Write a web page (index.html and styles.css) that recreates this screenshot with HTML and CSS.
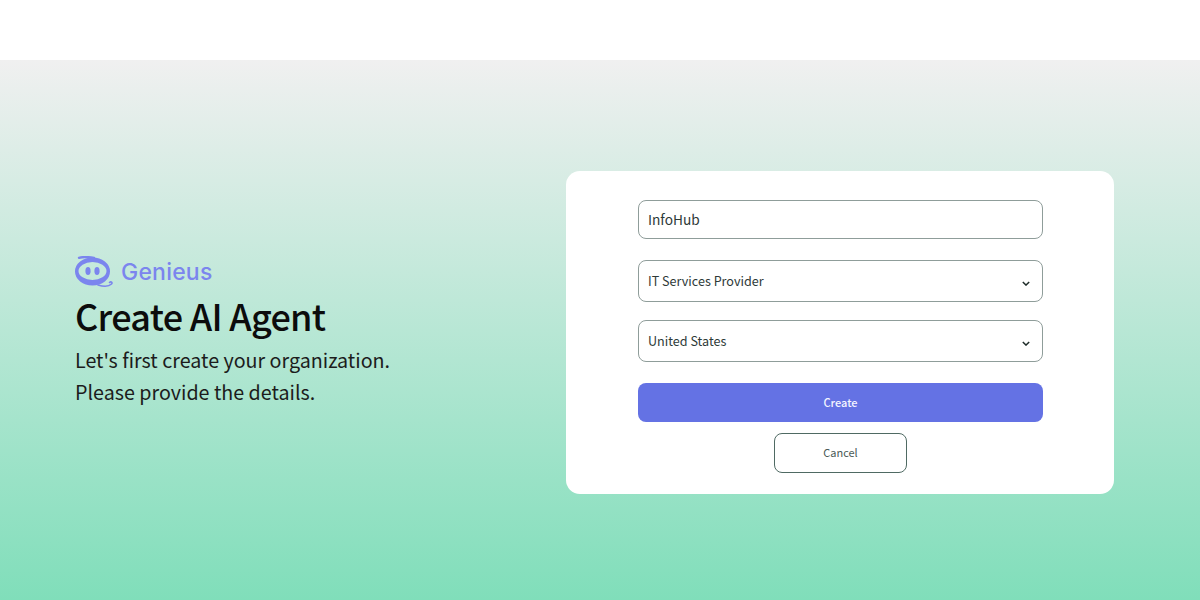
FILE: index.html
```html
<!DOCTYPE html>
<html lang="en">
<head>
    <meta charset="UTF-8">
    <title>Create AI Agent - Genieus</title>
    <link rel="stylesheet" href="styles.css">
</head>
<body>
    <div class="top-bar"></div>
    <div class="hero">
        <div class="intro">
            <div class="brand">
                <svg class="brand-icon" width="40" height="33" viewBox="0 0 40 33">
                    <path fill-rule="evenodd" d="M1 15.500 A17.500 14 0 1 1 36 15.500 A17.500 14 0 1 1 1 15.500 Z M4.500 15 A14 9 0 1 0 32.500 15 A14 9 0 1 0 4.500 15 Z" fill="#7b85ee"/>
                    <path d="M5 1.800 C9 0.800 15 1 20 2" fill="none" stroke="#7b85ee" stroke-width="2.400" stroke-linecap="round"/>
                    <ellipse cx="14" cy="15" rx="2.600" ry="4" fill="#7b85ee"/>
                    <ellipse cx="23" cy="15" rx="2.600" ry="4" fill="#7b85ee"/>
                    <path d="M24 29 C29 30.500 35 30.500 37.500 28 C39 26.500 37 25 35.500 26.500" fill="none" stroke="#7b85ee" stroke-width="1.600" stroke-linecap="round"/>
                </svg>
                <span class="brand-name">Genieus</span>
            </div>
            <h1>Create AI Agent</h1>
            <p>Let's first create your organization.<br>Please provide the details.</p>
        </div>

        <div class="card">
            <div class="field field-input"><span>InfoHub</span></div>
            <div class="field field-select">
                <span>IT Services Provider</span>
                <svg class="chevron" width="8" height="5" viewBox="0 0 10 6"><path d="M1 1 L5 5 L9 1" fill="none" stroke="#1f2d2a" stroke-width="1.800"/></svg>
            </div>
            <div class="field field-select second">
                <span>United States</span>
                <svg class="chevron" width="8" height="5" viewBox="0 0 10 6"><path d="M1 1 L5 5 L9 1" fill="none" stroke="#1f2d2a" stroke-width="1.800"/></svg>
            </div>
            <button class="btn-create">Create</button>
            <button class="btn-cancel">Cancel</button>
        </div>
    </div>
</body>
</html>
```

FILE: styles.css
```css
* {
    margin: 0;
    padding: 0;
    box-sizing: border-box;
}

body {
    font-family: "Noto Sans CJK SC", "Noto Sans", sans-serif;
    background: #ffffff;
    color: #111111;
    height: 600px;
    overflow: hidden;
}

.top-bar {
    height: 60px;
    background: #ffffff;
}

.hero {
    height: 540px;
    display: flex;
    justify-content: space-between;
    align-items: flex-start;
    padding: 111px 86px 0 75px;
    background: linear-gradient(180deg, #f0f0f0 0%, #80deba 100%);
}

.intro {
    margin-top: 85px;
    width: 400px;
}

.brand {
    display: flex;
    align-items: center;
    gap: 7px;
    height: 33px;
    margin-left: -1px;
}

.brand-name {
    font-family: "Inter", sans-serif;
    font-size: 23px;
    font-weight: 500;
    letter-spacing: 0.2px;
    color: #7b85ee;
    margin-bottom: 1px;
}

h1 {
    font-size: 36px;
    font-weight: 500;
    line-height: 50px;
    letter-spacing: -0.7px;
    color: #0c0c0c;
    margin-top: 1px;
}

.intro p {
    font-size: 19.7px;
    line-height: 32px;
    margin-top: 4px;
    color: #1c1c1c;
}

.card {
    width: 548px;
    height: 323px;
    background: #ffffff;
    border-radius: 14px;
    padding: 29px 71px 0 72px;
    display: flex;
    flex-direction: column;
    align-items: center;
}

.field {
    width: 100%;
    border: 1px solid #8f9d9a;
    border-radius: 8px;
    background: #ffffff;
    display: flex;
    align-items: center;
    justify-content: space-between;
    padding: 0 12px 0 9px;
    color: #2e3a38;
}

.field span {
    margin-bottom: 2px;
}

.field-input {
    height: 39px;
    font-size: 13.7px;
    margin-bottom: 21px;
}

.field-select {
    height: 42px;
    font-size: 12.6px;
}

.field-select.second {
    margin-top: 18px;
}

.chevron {
    margin-top: 4px;
}

.btn-create {
    width: 100%;
    height: 39px;
    margin-top: 21px;
    padding-bottom: 2px;
    border: none;
    border-radius: 8px;
    background: #6472e4;
    color: #f4f5ff;
    font-family: inherit;
    font-size: 11px;
    font-weight: 500;
}

.btn-cancel {
    width: 133px;
    height: 40px;
    margin-top: 11px;
    padding-bottom: 2px;
    border: 1px solid #4f6a63;
    border-radius: 8px;
    background: #ffffff;
    color: #4a5a56;
    font-family: inherit;
    font-size: 11px;
}
```
